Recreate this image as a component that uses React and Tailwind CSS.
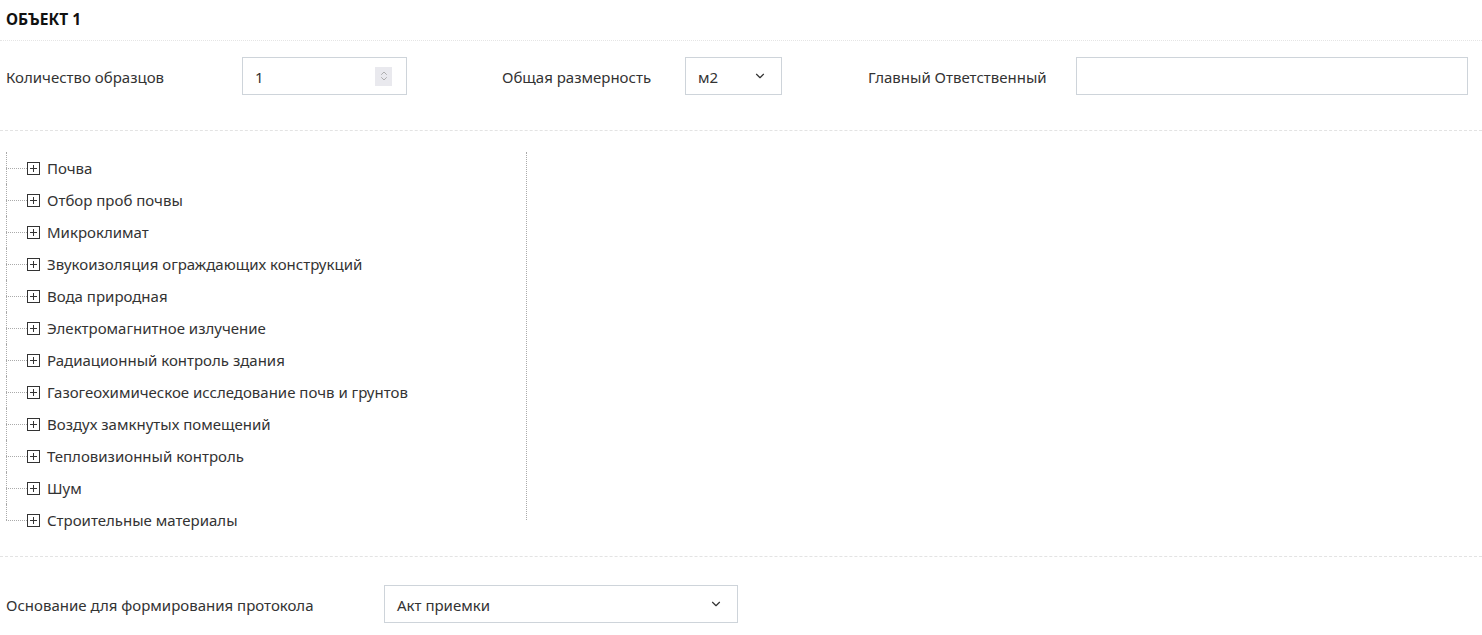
import { ChevronDown, ChevronsUpDown } from 'lucide-react'

const items = [
  'Почва',
  'Отбор проб почвы',
  'Микроклимат',
  'Звукоизоляция ограждающих конструкций',
  'Вода природная',
  'Электромагнитное излучение',
  'Радиационный контроль здания',
  'Газогеохимическое исследование почв и грунтов',
  'Воздух замкнутых помещений',
  'Тепловизионный контроль',
  'Шум',
  'Строительные материалы',
]

function Plus() {
  return (
    <span className="w-[13px] h-[13px] border border-[#333] flex items-center justify-center shrink-0">
      <svg width="9" height="9" viewBox="0 0 9 9">
        <path d="M4.5 1V8M1 4.5H8" stroke="#333" strokeWidth="1" />
      </svg>
    </span>
  )
}

export default function App() {
  return (
    <div className="w-[1482px] h-[635px] bg-white text-[#333] text-[15px] overflow-hidden" style={{ fontFamily: '"Noto Sans", sans-serif' }}>
      <div className="h-[41px] px-[6px] flex items-center font-bold text-[15.5px] text-[#111] border-b border-dotted border-[#e5e5e5]">
        ОБЪЕКТ 1
      </div>

      <div className="h-[90px] flex items-start pt-[16px] pl-[6px] border-b border-dashed border-[#e3e3e3]">
        <div className="w-[236px] h-[38px] flex items-center pt-[2px]">Количество образцов</div>
        <div className="w-[165px] h-[38px] border border-[#ced4da] flex items-center pl-[12px] pr-[14px] justify-between pt-[2px]">
          <span>1</span>
          <span className="w-[17px] h-[19px] bg-[#e9e9ee] flex items-center justify-center text-[#999] -mt-[2px]">
            <ChevronsUpDown size={12} strokeWidth={1.5} />
          </span>
        </div>
        <div className="w-[95px]" />
        <div className="w-[183px] h-[38px] flex items-center pt-[2px]">Общая размерность</div>
        <div className="w-[97px] h-[38px] border border-[#ced4da] flex items-center pl-[12px] pr-[14px] justify-between pt-[2px]">
          <span>м2</span>
          <ChevronDown size={14} strokeWidth={2} className="text-[#333] -mt-[2px]" />
        </div>
        <div className="w-[86px]" />
        <div className="w-[208px] h-[38px] flex items-center pt-[2px]">Главный Ответственный</div>
        <div className="w-[392px] h-[38px] border border-[#ced4da]" />
      </div>

      <div className="h-[426px] pt-[21px] pl-[6px] border-b border-dashed border-[#e3e3e3]">
        <div className="w-[521px] h-[368px] relative border-r border-dotted border-[#aaa]">
          {items.map(function (it, idx) {
            var last = idx === items.length - 1
            return (
              <div key={idx} className="h-[32px] flex items-center relative">
                <div className={'absolute left-0 top-0 border-l border-dotted border-[#aaa] ' + (last ? 'h-[16px]' : 'h-[32px]')} />
                <div className="w-[21px] border-t border-dotted border-[#aaa] ml-0" />
                <Plus />
                <span className="ml-[7px] whitespace-nowrap pt-[1px]">{it}</span>
              </div>
            )
          })}
        </div>
      </div>

      <div className="flex items-center pt-[28px] pl-[6px]">
        <div className="w-[378px] h-[38px] flex items-center pt-[2px]">Основание для формирования протокола</div>
        <div className="w-[354px] h-[38px] border border-[#ced4da] flex items-center pl-[12px] pr-[14px] justify-between pt-[2px]">
          <span>Акт приемки</span>
          <ChevronDown size={14} strokeWidth={2} className="text-[#333] -mt-[2px]" />
        </div>
      </div>
    </div>
  )
}
